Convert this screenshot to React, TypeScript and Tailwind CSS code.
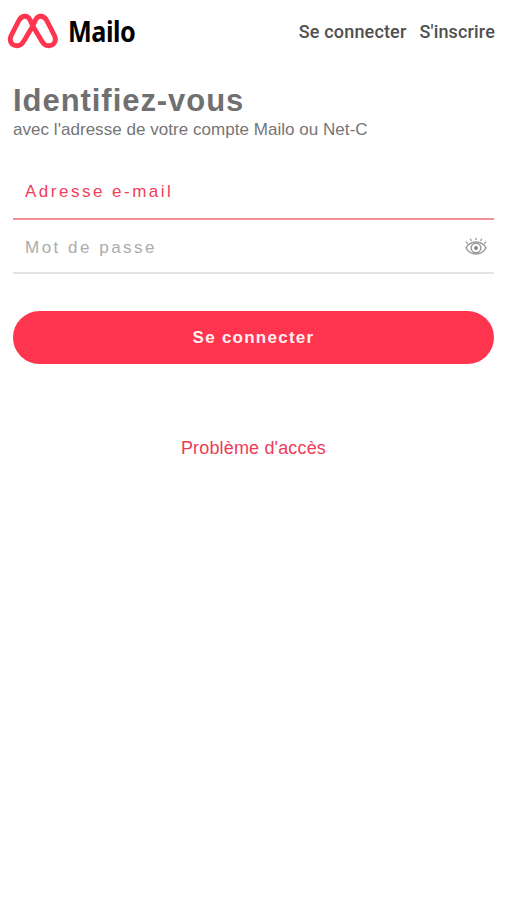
import { useState } from "react";

function LogoMark() {
  return (
    <svg width="52" height="38" viewBox="0 0 52 38" fill="none" aria-hidden="true">
      <path
        d="M4.2 23.5 L11.6 9 C14.6 3 20.3 2.6 23 7.8 L25.8 14 L35 29.4 C36.8 32.6 38.8 33.8 41.5 33.8 C47 33.8 50 28.8 47.4 23.5 L40 9 C37 3 31.3 2.6 28.6 7.8 L25.8 14 L16.6 29.4 C14.8 32.6 12.8 33.8 10.1 33.8 C4.6 33.8 1.6 28.8 4.2 23.5 Z"
        stroke="#ff354f"
        strokeWidth="4.9"
        strokeLinejoin="round"
      />
    </svg>
  );
}

function EyeIcon() {
  return (
    <svg width="22" height="20" viewBox="0 0 22 20" fill="none" stroke="#9a9a9a" aria-hidden="true">
      <path d="M1 11 C5.5 3.1 16.5 3.1 21 11 C16.5 18.9 5.5 18.9 1 11 Z" strokeWidth="1.5" />
      <circle cx="11" cy="11" r="4.8" strokeWidth="1.5" />
      <circle cx="11" cy="11" r="1.9" fill="#808080" stroke="none" />
      <path d="M1 4.7 L2.8 6.8 M5.3 1.7 L6.5 3.9 M11 0.7 V3.1 M16.7 1.7 L15.5 3.9 M21 4.7 L19.2 6.8" strokeWidth="1.3" />
    </svg>
  );
}

export default function App() {
  const [showPassword, setShowPassword] = useState(false);

  return (
    <div className="min-h-screen bg-white font-['Liberation_Sans',Arial,sans-serif]">
      {/* Logo and account links */}
      <header className="flex h-[62px] items-center justify-between pl-[7px] pr-3">
        <a href="#" className="flex items-center gap-[9px]">
          <LogoMark />
          <span className="origin-left scale-x-[0.9] font-['Noto_Sans',sans-serif] text-[28px] font-bold leading-none tracking-[-0.5px] text-black">
            Mailo
          </span>
        </a>
        <nav className="flex gap-[13px] whitespace-nowrap pt-px font-[Roboto,sans-serif] text-lg font-medium tracking-[0.16px] text-[#505050]">
          <a href="#">Se connecter</a>
          <a href="#">S'inscrire</a>
        </nav>
      </header>

      <main className="px-[13px] pt-[21px]">
        <h1 className="text-[31px] font-bold leading-9 tracking-[0.95px] text-[#707070]">Identifiez-vous</h1>
        <p className="text-[17px] leading-[22px] tracking-[0.04px] text-[#757575]">avec l'adresse de votre compte Mailo ou Net-C</p>

        <form onSubmit={(e) => e.preventDefault()}>
          <div className="mt-[23px] h-[56px] border-b-2 border-[#f38e9b]">
            <input
              type="email"
              placeholder="Adresse e-mail"
              className="h-[54px] w-full px-3 pt-0.5 text-[17px] tracking-[2.5px] outline-none placeholder:text-[#ef405b]"
            />
          </div>
          <div className="flex h-[54px] items-center border-b-2 border-[#e4e4e4] pr-[7px]">
            <input
              type={showPassword ? "text" : "password"}
              placeholder="Mot de passe"
              className="h-full min-w-0 flex-1 px-3 pt-[3px] text-[17px] tracking-[2.5px] outline-none placeholder:text-[#acacac]"
            />
            <button
              type="button"
              aria-label="Afficher le mot de passe"
              className="pt-px"
              onClick={() => setShowPassword(!showPassword)}
            >
              <EyeIcon />
            </button>
          </div>
          <button
            type="submit"
            className="mt-[37px] h-[53px] w-full rounded-full bg-[#ff354f] text-[17px] font-bold tracking-[1.25px] text-[#fff0f2]"
          >
            Se connecter
          </button>
        </form>

        <div className="mt-[70px] text-center text-lg leading-7 tracking-[0.16px] text-[#ec3c57]">
          <a href="#">Problème d'accès</a>
        </div>
      </main>
    </div>
  );
}
